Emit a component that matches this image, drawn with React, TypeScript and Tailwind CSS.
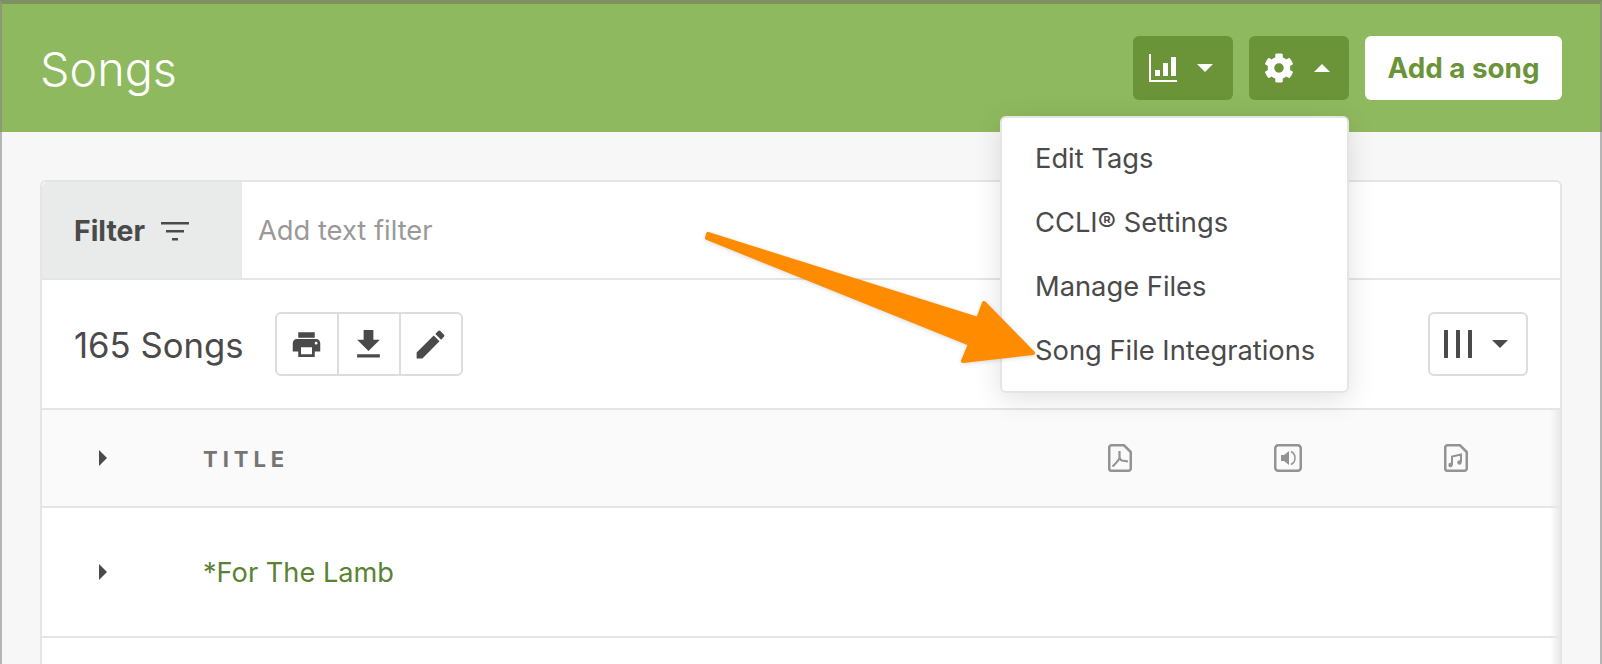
import { FaCog } from "react-icons/fa";
import { MdEdit, MdFileDownload, MdPrint } from "react-icons/md";

const Caret = ({ dir }: { dir: "up" | "down" | "right" }) => {
  if (dir === "right") {
    return (
      <svg width="8" height="16" viewBox="0 0 8 16" className="fill-[#4a4a4a]">
        <polygon points="0,0 8,8 0,16" />
      </svg>
    );
  }
  return (
    <svg width="16" height="8" viewBox="0 0 16 8" className="fill-current">
      <polygon points={dir === "down" ? "0,0 16,0 8,8" : "0,8 16,8 8,0"} />
    </svg>
  );
};

const ChartIcon = () => (
  <svg width="28" height="28" viewBox="0 0 28 28" className="fill-white">
    <rect x="0" y="0" width="2" height="28" />
    <rect x="0" y="26" width="28" height="2" />
    <rect x="6" y="16" width="5" height="6" />
    <rect x="14" y="9" width="5" height="13" />
    <rect x="22" y="3" width="5" height="19" />
  </svg>
);

const FilterIcon = () => (
  <svg width="28" height="20" viewBox="0 0 28 20" className="fill-[#4a4a4a]">
    <rect x="0" y="1" width="28" height="2.500" />
    <rect x="5" y="9" width="18" height="2.500" />
    <rect x="11" y="17" width="6" height="2.500" />
  </svg>
);

const PdfIcon = () => (
  <svg width="24" height="28" viewBox="0 0 24 28" fill="none" stroke="#939393">
    <path d="M3.500 1.250H16L22.750 8V24.500A2.250 2.250 0 0 1 20.500 26.750H3.500A2.250 2.250 0 0 1 1.250 24.500V3.500A2.250 2.250 0 0 1 3.500 1.250Z" strokeWidth="2.500" />
    <path d="M11.500 7V13C11.500 15 12.500 16 14 16.500C16 17 18 17 20 17.500M11.500 14C10.500 17 7 20 4.500 22.500" strokeWidth="2.200" />
  </svg>
);

const AudioIcon = () => (
  <svg width="28" height="28" viewBox="0 0 28 28" fill="none" stroke="#939393">
    <rect x="1.250" y="1.250" width="25.500" height="25.500" rx="3" strokeWidth="2.500" />
    <polygon points="7,11 10,11 15,7 15,21 10,17 7,17" fill="#939393" stroke="none" />
    <path d="M17 7.500C20 9 21 11.500 21 14C21 16.500 20 19 17 20.500" strokeWidth="1.500" />
  </svg>
);

const MusicIcon = () => (
  <svg width="24" height="28" viewBox="0 0 24 28" fill="none" stroke="#939393">
    <path d="M3.500 1.250H16L22.750 8V24.500A2.250 2.250 0 0 1 20.500 26.750H3.500A2.250 2.250 0 0 1 1.250 24.500V3.500A2.250 2.250 0 0 1 3.500 1.250Z" strokeWidth="2.500" />
    <path d="M8 21V12.500L17 10.500V18" strokeWidth="2" />
    <circle cx="6.500" cy="21" r="2.200" fill="#939393" stroke="none" />
    <circle cx="15.500" cy="18.500" r="2.200" fill="#939393" stroke="none" />
  </svg>
);

const menuItems = ["Edit Tags", "CCLI® Settings", "Manage Files", "Song File Integrations"];

const App = () => {
  return (
    <div className="relative flex h-[664px] w-[1602px] flex-col overflow-hidden font-['Inter',sans-serif] text-[#4a4a4a]">
      <div className="flex h-[132px] shrink-0 items-center justify-between border-x-2 border-t-4 border-x-[#8a9a74] border-t-[#7d9161] bg-[#8fb95f] pl-[38px] pr-[38px]">
        <h1 className="pt-[2px] text-[46.700px] font-light leading-none text-white">Songs</h1>
        <div className="flex gap-4">
          <button className="flex h-16 w-[100px] items-center justify-center gap-5 rounded-md bg-[#6b9438] pr-[5px] text-white">
            <ChartIcon />
            <Caret dir="down" />
          </button>
          <div className="relative">
            <button className="flex h-16 w-[100px] items-center justify-center gap-5 rounded-md bg-[#6b9438] pr-[5px] text-white">
              <FaCog className="h-[30px] w-[30px]" />
              <Caret dir="up" />
            </button>
            <div className="absolute right-0 top-[80px] z-10 w-[349px] rounded-md border-2 border-[#e5e5e5] bg-white pb-2 pl-[33px] pt-[9px] shadow-[0_6px_28px_rgba(0,0,0,0.12)]">
              {menuItems.map((item) => (
                <div key={item} className="flex h-16 items-center whitespace-nowrap text-[27.300px]">
                  {item}
                </div>
              ))}
            </div>
          </div>
          <button className="h-16 w-[197px] rounded-md bg-white pt-[2px] text-[27.800px] font-bold text-[#6b9438]">
            Add a song
          </button>
        </div>
      </div>

      <div className="flex-1 border-x-2 border-b-2 border-[#b5b5b5] bg-[#f7f7f7] pl-[38px] pr-[38px] pt-[48px]">
        <div className="relative h-[600px] rounded-t-md border-2 border-[#e5e5e5] bg-white">
          <div className="flex h-[96px]">
            <div className="flex w-[200px] items-center gap-[16px] rounded-tl-md bg-[#e9ebea] pl-8 pt-[2px] text-[28.400px] font-bold">
              Filter
              <FilterIcon />
            </div>
            <div className="flex flex-1 items-center pl-4 pt-[2px] text-[27.300px] text-[#999999]">Add text filter</div>
          </div>

          <div className="flex h-[132px] items-center justify-between border-y-2 border-[#e5e5e5] px-8">
            <div className="flex items-center gap-[31px]">
              <span className="pt-[2px] text-[34.700px]">165 Songs</span>
              <div className="flex h-16 w-[188px] rounded-md border-2 border-[#dddddd]">
                <div className="flex flex-1 items-center justify-center">
                  <MdPrint size={33} />
                </div>
                <div className="flex flex-1 items-center justify-center border-x-2 border-[#dddddd]">
                  <MdFileDownload size={39} />
                </div>
                <div className="flex flex-1 items-center justify-center">
                  <MdEdit size={37} />
                </div>
              </div>
            </div>
            <button className="flex h-16 w-[100px] items-center justify-center gap-5 rounded-md border-2 border-[#dddddd] pr-1">
              <span className="flex gap-2">
                <span className="h-7 w-1 bg-[#4a4a4a]" />
                <span className="h-7 w-1 bg-[#4a4a4a]" />
                <span className="h-7 w-1 bg-[#4a4a4a]" />
              </span>
              <Caret dir="down" />
            </button>
          </div>

          <div className="grid h-[98px] grid-cols-[161px_1fr_168px_168px_168px_20px] items-center border-b-2 border-[#e5e5e5] bg-[#fafafa]">
            <div className="flex pl-[57px]">
              <Caret dir="right" />
            </div>
            <div className="pt-[3px] text-[22px] font-bold uppercase tracking-[0.225em] text-[#757575]">Title</div>
            <div className="flex justify-center">
              <PdfIcon />
            </div>
            <div className="flex justify-center">
              <AudioIcon />
            </div>
            <div className="flex justify-center">
              <MusicIcon />
            </div>
          </div>

          <div className="grid h-[130px] grid-cols-[161px_1fr] items-center border-b-2 border-[#e5e5e5]">
            <div className="flex pl-[57px]">
              <Caret dir="right" />
            </div>
            <div className="pt-[2px] text-[27.200px] text-[#5a8232]">*For The Lamb</div>
          </div>

          <div className="absolute bottom-0 right-0 top-[228px] w-[10px] bg-gradient-to-l from-[#e9e9e9] to-transparent" />
        </div>
      </div>

      <svg className="absolute left-0 top-0 z-20 h-[664px] w-[1602px] drop-shadow-[0_1px_2px_rgba(0,0,0,0.15)]" viewBox="0 0 1602 664">
        <polygon
          points="708,234 978,319 984,303 1033,353 963,361 970,344 707,238"
          fill="#ff8c00"
          stroke="#ff8c00"
          strokeWidth="4"
          strokeLinejoin="round"
        />
      </svg>
    </div>
  );
};

export default App;
